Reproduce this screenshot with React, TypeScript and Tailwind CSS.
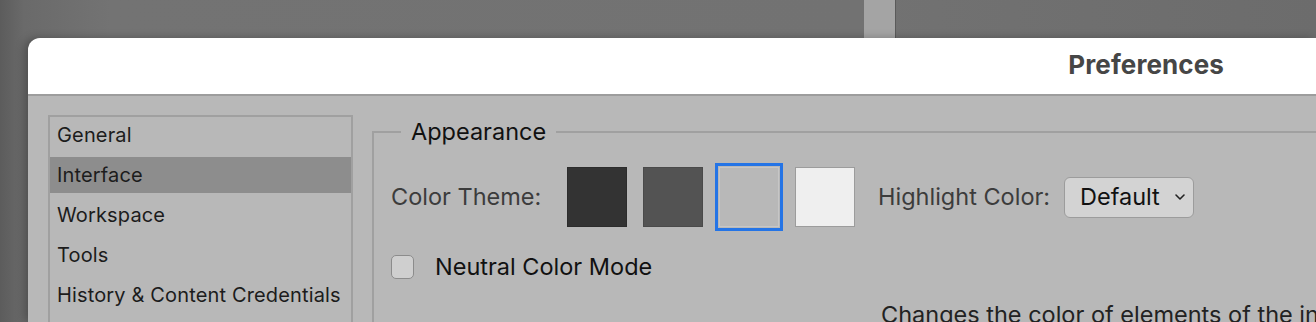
import React from 'react'

const sections = ['General', 'Interface', 'Workspace', 'Tools', 'History & Content Credentials']

const swatches = [
  { color: 'bg-[#333333] border-[#2c2c2c]', selected: false },
  { color: 'bg-[#535353] border-[#4a4a4a]', selected: false },
  { color: 'bg-[#b8b8b8] border-[#c6c6c6]', selected: true },
  { color: 'bg-[#efefef] border-[#9c9c9c]', selected: false },
]

export default function App() {
  return (
    <div className="w-[1316px] h-[322px] overflow-hidden flex flex-col bg-[linear-gradient(90deg,#5c5c5c_0px,#6a6a6a_24px,#737373_110px,#727272_860px,#6c6c6c_100%)] font-['Inter','Noto_Sans',sans-serif]">
      {/* Background behind the dialog */}
      <div className="h-[38px] flex shrink-0">
        <div className="w-[864px]" />
        <div className="w-[32px] bg-[#a4a4a4] border-r border-[#5a5a5a]" />
        <div className="flex-1" />
      </div>

      {/* Dialog */}
      <div className="ml-[28px] flex-1 flex flex-col rounded-tl-[12px] overflow-hidden shadow-[-4px_0_8px_rgba(0,0,0,0.25)]">
        <div className="h-[56px] shrink-0 bg-white flex items-center justify-end pr-[92px]">
          <h1 className="text-[26px] leading-[32px] font-bold text-[#464646] tracking-[0.1px] mt-[-2px]">Preferences</h1>
        </div>

        <div className="flex-1 bg-[#b8b8b8] border-t-2 border-[#9d9d9d] flex pl-[20px] pt-[19px]">
          {/* Section list */}
          <ul className="w-[305px] h-[240px] shrink-0 border-2 border-[#a0a0a0] flex flex-col gap-[4px] text-[20px] leading-[26px] tracking-[0.15px] text-[#1c1c1c]">
            {sections.map((s) => (
              <li
                key={s}
                className={`h-[36px] shrink-0 flex items-center pl-[7px] whitespace-nowrap ${s === 'Interface' ? 'bg-[#8d8d8d]' : ''}`}
              >
                {s}
              </li>
            ))}
          </ul>

          {/* Appearance group */}
          <fieldset className="ml-[19px] mt-[3px] flex-1 border-l-2 border-t-2 border-[#a0a0a0] pl-[17px] min-w-0 text-[23.5px] leading-[28px]">
            <legend className="ml-[10px] px-[10px] text-[#111111]">Appearance</legend>

            <div className="mt-[21px] flex items-center h-[60px]">
              <span className="text-[#3c3c3c] w-[176px] whitespace-nowrap">Color Theme:</span>
              <div className="flex gap-[16px]">
                {swatches.map((sw, i) => (
                  <div
                    key={i}
                    className={`w-[60px] h-[60px] border ${sw.color} ${sw.selected ? 'outline-[3px] outline-solid outline-[#2474e6] outline-offset-[1px]' : ''}`}
                  />
                ))}
              </div>
              <span className="ml-[23px] w-[186px] text-[#3c3c3c] whitespace-nowrap">Highlight Color:</span>
              <button className="w-[130px] h-[41px] rounded-[6px] bg-[#d3d3d3] border border-[#9c9c9c] flex items-center pl-[15px] text-[#111111]">
                <span>Default</span>
                <svg className="ml-[14px]" width="12" height="8" viewBox="0 0 12 8" fill="none">
                  <path d="M2 2l4 4 4-4" stroke="#222" strokeWidth="1.6" strokeLinecap="round" strokeLinejoin="round" />
                </svg>
              </button>
            </div>

            <label className="mt-[26px] h-[28px] flex items-center">
              <span className="w-[23px] h-[24px] rounded-[5px] bg-[#cfcfcf] border border-[#8c8c8c]" />
              <span className="ml-[21px] text-[#111111] whitespace-nowrap">Neutral Color Mode</span>
            </label>

            <p className="mt-[20px] ml-[490px] text-[#222222] whitespace-nowrap">
              Changes the color of elements of the interface to a neutral gray.
            </p>
          </fieldset>
        </div>
      </div>
    </div>
  )
}
